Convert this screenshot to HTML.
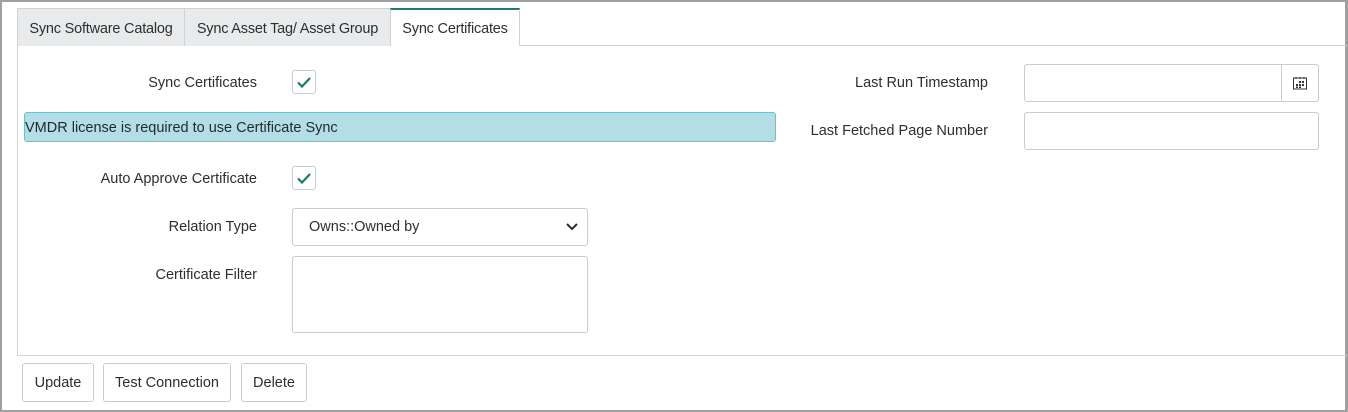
<!DOCTYPE html>
<html><head><style>
*{box-sizing:border-box;margin:0;padding:0}
body{width:1348px;height:412px;background:#fff;font-family:"Liberation Sans",sans-serif;font-size:14.5px;color:#2e2e2e;position:relative;overflow:hidden}
.outer{position:absolute;left:0;top:0;width:1348px;height:412px;border:2px solid #a0a0a0;border-right-width:3px}
.abs{position:absolute}
.tab{position:absolute;top:8px;height:38px;background:#e8eaeb;border:1px solid #cfd2d4;border-bottom:none;line-height:40px;text-align:center;font-size:14.5px;color:#2e2e2e;letter-spacing:-0.2px}
.panel{position:absolute;left:17px;top:45px;width:1330px;height:311px;border:1px solid #cfd2d4;border-right:none}
.lbl{position:absolute;text-align:right;font-size:14.5px;color:#2e2e2e}
.cb{position:absolute;width:24px;height:24px;border:1px solid #c9cdd0;border-radius:3px;background:#fff}
.inp{position:absolute;border:1px solid #c9cdd0;border-radius:3px;background:#fff}
.btn{position:absolute;top:363px;height:39px;border:1px solid #c9cdd0;border-radius:3px;background:#fff;line-height:39px;text-align:center;font-size:14.5px}
</style></head><body>
<div class="outer"></div>
<div class="panel"></div>
<div class="tab" style="left:17px;width:168px">Sync Software Catalog</div>
<div class="tab" style="left:184px;width:207px">Sync Asset Tag/ Asset Group</div>
<div class="tab" style="left:390px;width:130px;background:#fff;border-top:2px solid #1f7a6e;height:38px;line-height:38px">Sync Certificates</div>

<div class="lbl" style="left:40px;width:217px;top:75px">Sync Certificates</div>
<div class="cb" style="left:292px;top:70px"><svg width="22" height="22" viewBox="0 0 22 22"><path d="M5 11.5l4 4 8-8.5" fill="none" stroke="#1f7a6e" stroke-width="2.2"/></svg></div>

<div class="abs" style="left:24px;top:112px;width:752px;height:30px;background:#b4dee5;border:1px solid #6fbfcb;border-radius:3px;line-height:30px;font-size:14.5px;color:#1e2a2e">VMDR license is required to use Certificate Sync</div>

<div class="lbl" style="left:20px;width:237px;top:171px">Auto Approve Certificate</div>
<div class="cb" style="left:292px;top:166px"><svg width="22" height="22" viewBox="0 0 22 22"><path d="M5 11.5l4 4 8-8.5" fill="none" stroke="#1f7a6e" stroke-width="2.2"/></svg></div>

<div class="lbl" style="left:40px;width:217px;top:219px">Relation Type</div>
<div class="inp" style="left:292px;top:208px;width:296px;height:38px;line-height:37px;padding-left:16px;font-size:14.5px">Owns::Owned by
<svg class="abs" style="right:8px;top:13px" width="14" height="10" viewBox="0 0 14 10"><path d="M2 2l5 5 5-5" fill="none" stroke="#2e2e2e" stroke-width="2"/></svg></div>

<div class="lbl" style="left:40px;width:217px;top:267px">Certificate Filter</div>
<div class="inp" style="left:292px;top:256px;width:296px;height:77px"></div>

<div class="lbl" style="left:760px;width:228px;top:75px">Last Run Timestamp</div>
<div class="inp" style="left:1024px;top:64px;width:295px;height:38px"></div>
<div class="abs" style="left:1281px;top:65px;width:1px;height:36px;background:#c9cdd0"></div>
<svg class="abs" style="left:1292px;top:75px" width="16" height="16" viewBox="0 0 16 16"><rect x="1.5" y="3" width="13" height="11" fill="none" stroke="#333" stroke-width="1"/><path d="M4 2v2M8 2v2M12 2v2" stroke="#333"/><rect x="7" y="6" width="2" height="2" fill="#333"/><rect x="10" y="6" width="2" height="2" fill="#333"/><rect x="4" y="9" width="2" height="2" fill="#333"/><rect x="7" y="9" width="2" height="2" fill="#333"/><rect x="10" y="9" width="2" height="2" fill="#333"/><rect x="4" y="11.5" width="2" height="1.5" fill="#333"/><rect x="7" y="11.5" width="2" height="1.5" fill="#333"/></svg>

<div class="lbl" style="left:760px;width:228px;top:123px">Last Fetched Page Number</div>
<div class="inp" style="left:1024px;top:112px;width:295px;height:38px"></div>

<div class="btn" style="left:22px;width:72px">Update</div>
<div class="btn" style="left:103px;width:128px">Test Connection</div>
<div class="btn" style="left:241px;width:66px">Delete</div>
</body></html>
